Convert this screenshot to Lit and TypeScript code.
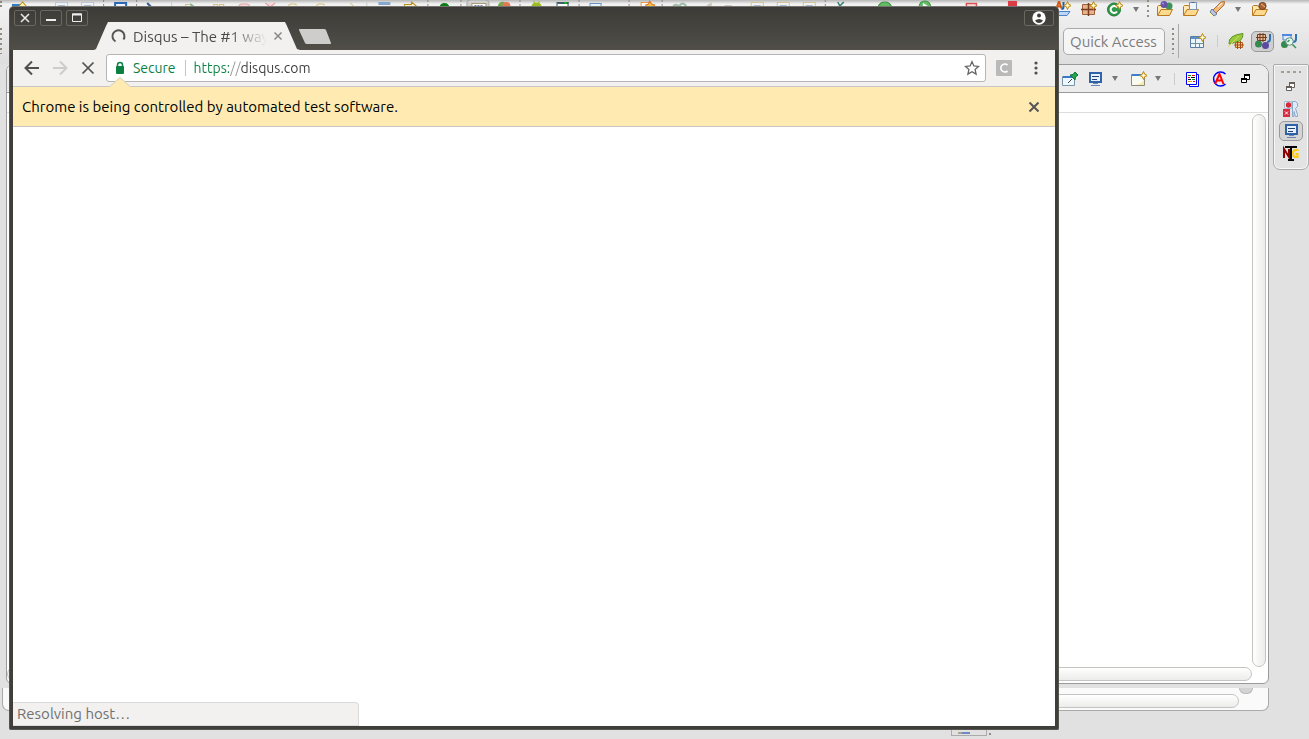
import { LitElement, html, css, svg } from "lit";
import { customElement } from "lit/decorators.js";

const shared = css`
  :host { display: block; box-sizing: border-box; font-family: Ubuntu, "Noto Sans", "Open Sans", sans-serif; }
  * { box-sizing: border-box; }
  button, input { font: inherit; margin: 0; padding: 0; border: 0; background: none; color: inherit; outline: none; }
  button { display: flex; align-items: center; justify-content: center; flex: none; }
  svg { display: block; flex: none; }
`;

const sparkle = svg`<path d="M12.500.5l1.200 2.800 2.800 1.200-2.800 1.200-1.200 2.800-1.200-2.800-2.800-1.200 2.800-1.200z" fill="#fff8cf" stroke="#b8860b"/>`;
const folder = svg`<path d="M.5 14.500V5.500l1-1h4l1 1.500h6v3" fill="#ffe9b0" stroke="#b9791f"/><path d="M.7 14.500L4 8.500h11.500l-3 6z" fill="#fdd98d" stroke="#b9791f"/>`;

const icons: Record<string, unknown> = {
  aspect: svg`<path d="M1.500 14.500l3-4h10.500l-3 4z" fill="#b9d8f8" stroke="#4b80c4"/><path d="M1.500 7.500L4 0l2.500 7.500M2.500 5.500h3" fill="none" stroke="#d05a10" stroke-width="2"/><path d="M8.500 1v5q0 2-2 2" fill="none" stroke="#1b5fa8" stroke-width="2"/>${sparkle}`,
  package: svg`<path d="M1.500 3.500h12v10h-12z" fill="#e3b48c" stroke="#a35f38"/><path d="M7.500 2v13M0 8.500h15" stroke="#7b3b22" stroke-width="1.500"/>${sparkle}`,
  klass: svg`<circle cx="7" cy="8.500" r="6.500" fill="#31994a" stroke="#1c7434"/><path d="M10 6.500a3.500 3.500 0 1 0 0 4" fill="none" stroke="#fff" stroke-width="2"/>${sparkle}`,
  types: svg`${folder}<circle cx="12" cy="5" r="3.500" fill="#39935a"/><circle cx="7" cy="3.500" r="3.500" fill="#6552a7"/><circle cx="6" cy="2.500" r="1" fill="#a99bd8"/>`,
  task: svg`${folder}<path d="M6.500 1.500h7v7h-7z" fill="#eef4fb" stroke="#7d93ad"/><path d="M8.500 1.500h3" stroke="#4d6a8c"/>`,
  rocket: svg`<path d="M0 16l2-6 4 4z" fill="#fff6a8"/><path d="M4 9l8-8 3.500-.5-.5 3.500-8 8z" fill="#f4b979" stroke="#aa6e35"/><path d="M3 8l5 5-3 2-4-4z" fill="#b6c4dc" stroke="#6f7fa0"/><path d="M9 6l4-4" stroke="#fff"/>`,
  open: svg`${folder}<circle cx="10.500" cy="5" r="3.600" fill="#a86334" stroke="#74401e"/><path d="M9 3l4 3" stroke="#e6bb90"/>`,
  perspective: svg`<path d="M.5 3.500h13v11H.5z" fill="#e9f5fb" stroke="#5b7da0"/><path d="M1 5h12" stroke="#5d90c4" stroke-width="2"/><path d="M5.500 6v8M1 10.500h12M9.500 10v4" stroke="#6e9297"/>${sparkle}`,
  leaf: svg`<path d="M1 11Q0 2 15 .5q0 8-8 9z" fill="#93cb3d" stroke="#63942a"/><path d="M0 14L11 3" stroke="#e3d060"/><path d="M7.500 9.500h7v5h-7z" fill="#f8c791" stroke="#b5631c"/><path d="M9.500 8v8M12.500 8v8M6 12h10" stroke="#a34c12"/>`,
  java: svg`<path d="M2.500 1.500h8v6h-8z" fill="#e8bd96" stroke="#713b20"/><path d="M5 0v9M8 0v9M1 4.500h11" stroke="#713b20"/><circle cx="3.500" cy="11" r="3.500" fill="#34894e"/><circle cx="10.500" cy="12.500" r="3.500" fill="#5d4aa0"/><path d="M15 1v5q0 3-3 3" fill="none" stroke="#2e72b1" stroke-width="2"/>`,
  browse: svg`<path d="M2 2h8v5H2z" fill="#dcebfa" stroke="#4f86c8"/><path d="M1 2h10" stroke="#4f86e0" stroke-width="2"/><path d="M15 1v5q0 3-3 3" fill="none" stroke="#2e72b1" stroke-width="2"/><circle cx="3.500" cy="11.500" r="3.500" fill="#34894e"/><circle cx="8.500" cy="8.500" r="3.800" fill="#e7f6ed" stroke="#608c83"/><path d="M6.500 9l2-2M11.500 11.500L15 15" stroke="#37945a" stroke-width="1.500"/>`,
  pin: svg`<path d="M.5 5.500h12v9H.5z" fill="#edf8fe" stroke="#7794aa"/><path d="M1 6h11" stroke="#377bc6" stroke-width="2"/><path d="M6 12l4-4" stroke="#444"/><path d="M8 4l5 5 .5-3L16 4l-3-3-2 2.500z" fill="#23a452" stroke="#137238"/>`,
  monitor: svg`<path d="M2 2h11v9H2z" fill="#e5f1ff" stroke="#2f62a9" stroke-width="2"/><path d="M4 5.500h7M4 8.500h5" stroke="#243f76"/><path d="M5 12.500h5M3 14.500h9" stroke="#6685b4"/>`,
  console: svg`<path d="M.5 3.500h13v11H.5z" fill="#f8fbef" stroke="#8b897a"/><path d="M1 4h12" stroke="#3c7fcf" stroke-width="2"/><path d="M4 14Q12 13 13 8v6z" fill="#fae8a9"/>${sparkle}`,
  log: svg`<path d="M4.500 3.500h9v12h-9z" fill="#fff" stroke="#00f"/><path d="M1.500 1.500h10v12h-10z" fill="#fff" stroke="#00f"/><path d="M3 4.500h3M7 8.500h3" stroke="#080"/><path d="M7 4.500h3M3 6.500h2" stroke="#e00"/><path d="M6 6.500h4M3 8.500h3" stroke="#111"/><path d="M3 10.500h4" stroke="#d8a800"/><path d="M8 10.500h2" stroke="#e00"/>`,
  annotate: svg`<path d="M14.500 3A7 7 0 1 0 14.500 13" fill="none" stroke="#00f" stroke-width="1.500"/><path d="M4 13L8.500 3 12.500 13M6 9.500h5" fill="none" stroke="#f00" stroke-width="2"/>`,
  restore: svg`<path d="M6.500 4.500h5v4h-5zM3.500 8.500h5v3h-5z" fill="#fff" stroke="currentColor"/><path d="M6 4h6M3 8h6" stroke="currentColor" stroke-width="2"/>`,
  server: svg`<path d="M1.500.5h7v7h-7z" fill="#e2f0fb" stroke="#aabace"/><circle cx="5.500" cy="4" r="2.700" fill="#d62835"/><path d="M9.500 15.500V.5h3q3 1 2 5l-2 2 2 6v2h-2l-1.500-5v5z" fill="#dfeaf6" stroke="#8ba8c8"/><path d="M0 8h7v8H0z" fill="#d82c42"/><path d="M2 10.500l3 3m0-3l-3 3" stroke="#fff"/>`,
  testng: svg`<path d="M1 13V4l5 8V4" fill="none" stroke="#900000" stroke-width="2"/><path d="M15.500 5h-3q-2.500 0-2.500 3.500t2.500 3.500h2V9h-2" fill="none" stroke="#fc0" stroke-width="2"/><path d="M2 2h12M8 2v13M5 15h6" stroke="#000" stroke-width="2"/>`,
};

const icon = (name: string) => html`<svg width="16" height="16" viewBox="0 0 16 16" aria-hidden="true">${icons[name]}</svg>`;
const tool = (name: string, label: string) => html`<button class="tool" aria-label=${label}>${icon(name)}</button>`;
const arrow = (label: string) => html`<button class="arrow" aria-label=${label}><svg width="6" height="5" viewBox="0 0 6 5"><path d="M0 0h6L3 5z" fill="#777"/></svg></button>`;

@customElement("ide-toolbars")
class IdeToolbars extends LitElement {
  static styles = [shared, css`
    :host { background: linear-gradient(#b7b7b7, #f2f2f2 4px, #dedede); }
    .row { display: flex; align-items: center; justify-content: flex-end; }
    .main { height: 18px; gap: 10px; padding-right: 41px; }
    .strip { flex: 1; min-width: 0; overflow: hidden; align-self: flex-start; }
    .search { height: 46px; padding-right: 12px; gap: 7px; }
    .tool, .toggled { width: 16px; height: 16px; }
    .arrow { margin-right: 1px; }
    .toggled { width: 23px; height: 21px; border: 1px solid #999; border-radius: 5px; background: #cfcfcf; }
    .grip { width: 2px; align-self: stretch; background: repeating-linear-gradient(#928d84 0 2px, transparent 2px 5px); }
    .main .grip { margin: 0 -2px 0 -3px; }
    .search .grip { height: 26px; align-self: center; }
    .first { margin-right: auto; }
    .rule { width: 1px; height: 34px; background: #aaa; margin-left: -3px; margin-right: 4px; }
    .thin { width: 1px; height: 12px; background: #ccc; margin: 0 3px 0 4px; }
    .quick { width: 102px; height: 27px; padding: 0 6px; border: 1px solid #aaa; border-radius: 5px; background: #f5f5f5; font-size: 15px; }
    .quick::placeholder { color: #7c7c7c; opacity: 1; }
  `];

  render() {
    const dots = [103, 136, 427, 460, 519, 578, 628, 661, 824];
    const pages = [55, 81, 750, 776, 802];
    return html`
      <div class="row main">
        <svg class="strip" height="8" viewBox="0 0 1044 8" preserveAspectRatio="xMinYMin slice" aria-hidden="true">
          ${dots.map((x) => svg`<path d="M${x} 0h1v2h-1zM${x} 4h1v2h-1z" fill="#8d8980"/>`)}
          ${pages.map((x) => svg`<path d="M${x}.5 8V2.500h12V8" fill="#eff2f5" stroke=${x > 700 ? "#d4c496" : "#bcc7cf"}/><path d="M${x + 3} 5.500h7" stroke="#a9b8cd"/>`)}
          <path d="M0 1h2v2H0zM0 5h2v2H0z" fill="#8d8980"/>
          <path d="M12 4h9v3h-9z" fill="#2e7cc3"/><path d="M18 7l4.500-5L27 7z" fill="#fff4b0" stroke="#bb8610"/>
          <path d="M115 8V3h11v5" fill="#eef5ff" stroke="#2c66b5" stroke-width="2"/>
          <path d="M147 3l5 5" stroke="#335c91" stroke-width="2"/><path d="M171.500 2v5M366.500 2v5" stroke="#ccc"/>
          <path d="M185.500 8V4.500h4M213.500 8V4.500h4V8m2 0V4.500h4V8M288.500 8V5l2-1h4l2 1M316.500 8V5l2-1h4l2 1M350 3l5 5" fill="none" stroke="#d8c080"/>
          <path d="M190 4l4 3" stroke="#7eb98d" stroke-width="2"/><path d="M239 8V5l2-1h6l2 1v3M265 3l5 4 5-4" fill="#f8d8d8" stroke="#e4a4a4"/>
          <path d="M378 2h12v3h-12z" fill="#86a8ce"/><path d="M404 8V4.500h7V2l5 4" fill="#fff4c8" stroke="#be8b20"/>
          <path d="M439 7q1-4 5-4t5 4z" fill="#087e13"/>
          <path d="M466.500 8V3q0-3 4-3h14q4 0 4 3v5" fill="#d0d0d0" stroke="#aaa"/><path d="M471.500 8V3.500h14V8" fill="#fff" stroke="#aa9b73"/><path d="M474 5.500h9" stroke="#657fa2" stroke-dasharray="2 1"/>
          <path d="M497 7q1-6 7-5v5z" fill="#72a850"/><circle cx="506" cy="6" r="4" fill="#e77753"/>
          <path d="M531 7q1-4 5-4t5 4zM533 1l2 3m4-3l-2 3" fill="#9dbc22" stroke="#9dbc22"/>
          <path d="M556.500 8V2.500h11V8" fill="#fff" stroke="#315569"/><path d="M557 3h11" stroke="#3f606b" stroke-width="2"/><path d="M564 3h2" stroke="#0c0" stroke-width="2"/>
          <path d="M589.500 8V3.500h11V8" fill="#e5f4ff" stroke="#6992bf"/>
          <path d="M640.500 8V2.500h8V8" fill="#fff" stroke="#e49b4c"/><path d="M649 1l2 3 3 1-2 3h-5l-2-3 3-1z" fill="#ffc34d" stroke="#dd7924"/>
          <path d="M672 7q3-4 6-1M678 7q4-7 8 0" fill="none" stroke="#9fbeaa" stroke-width="2"/><path d="M704 7l7-5v5zM724 5h7v2h-7z" fill="#cbc7bb"/>
          <path d="M837 2l2 4m0 0l4-4" stroke="#357a72" fill="none" stroke-width="1.500"/>
          <path d="M877 7q2-5 7-5t7 5zM918 7q1-6 6-6t6 6z" fill="#64bc65" stroke="#3a9344"/><path d="M922 3l5 3-5 2z" fill="#fff"/>
          <path d="M965.500 8V3.500h10V8" fill="#ffdada" stroke="#d65454" stroke-width="1.500"/><path d="M1007 1h9v7h-9z" fill="#dc3d45"/>
        </svg>
        ${tool("aspect", "New aspect")}${tool("package", "New package")}${tool("klass", "New class")}${arrow("New class options")}
        <span class="grip"></span>
        ${tool("types", "Open type")}${tool("task", "Open task")}${tool("rocket", "Launch")}${arrow("Launch options")}${tool("open", "Open resource")}
      </div>
      <div class="row search">
        <span class="grip first"></span>
        <input class="quick" placeholder="Quick Access" aria-label="Quick Access">
        <span class="grip"></span><span class="rule"></span>
        ${tool("perspective", "Open perspective")}<span class="thin"></span>
        ${tool("leaf", "Spring")}<button class="toggled" aria-label="Java" aria-pressed="true">${icon("java")}</button>${tool("browse", "Java browsing")}
      </div>`;
  }
}

@customElement("ide-workbench")
class IdeWorkbench extends LitElement {
  static styles = [shared, css`
    :host { display: flex; flex: 1; flex-direction: column; min-height: 0; }
    .work { display: flex; flex: 1; min-height: 0; gap: 4px; padding-left: 6px; align-items: stretch; }
    .view { flex: 1; display: flex; flex-direction: column; border: 1px solid #9a9a9a; border-radius: 7px 10px 6px 6px; background: #fff; overflow: hidden; }
    .tabs { height: 28px; flex: none; display: flex; align-items: center; justify-content: flex-end; gap: 10px; padding-right: 14px; border-bottom: 1px solid #9a9a9a; background: #ececec; }
    .tool { width: 16px; height: 16px; }
    .tabs .tool:last-child { margin-left: 1px; }
    .arrow { margin: 0 3px 0 -2px; }
    .thin { width: 1px; height: 12px; background: #ccc; }
    .label { height: 20px; flex: none; border-bottom: 1px solid #ddd; }
    .pane { flex: 1; display: grid; grid-template-columns: 1fr 14px; grid-template-rows: 1fr 14px; padding: 1px 2px 2px 0; }
    .vbar, .hbar { border: 1px solid #c4c4c0; border-radius: 7px; background: linear-gradient(90deg, #fff, #ececea); }
    .vbar { grid-column: 2; }
    .hbar { grid-column: 1; background: linear-gradient(#fff, #ececea); }
    .trim { width: 36px; height: 106px; display: flex; flex-direction: column; align-items: center; gap: 6px; padding-top: 6px; border: 1px solid #aaa; border-radius: 2px 2px 7px 7px; background: #e3e3e3; box-shadow: inset 0 0 0 1px #f7f7f7; color: #665f59; }
    .dots { width: 20px; height: 2px; background: repeating-linear-gradient(90deg, #a49f95 0 3px, transparent 3px 6px); }
    .active { width: 24px; height: 20px; padding-left: 2px; border: 1px solid #999; border-radius: 5px; background: #d5d5d5; margin: -2px 0; }
    .lower { height: 23px; margin: 4px 40px 0 2px; border: 1px solid #aaa; border-top: 0; border-radius: 0 0 7px 7px; background: #fafafa; display: flex; padding: 6px 29px 2px 6px; position: relative; }
    .lower .hbar { flex: 1; }
    .stub { position: absolute; right: 15px; top: 0; width: 14px; height: 6px; border-radius: 0 0 7px 7px; background: #d4d4d4; border: 1px solid #bbb; border-top: 0; }
    .status { height: 28px; flex: none; display: flex; justify-content: flex-end; padding: 17px 318px 0 0; gap: 2px; }
    .job { width: 36px; height: 8px; border: 1px solid #aaa; border-top: 0; }
    .job svg { margin: 0 0 0 6px; }
    .grip { width: 2px; height: 9px; background: repeating-linear-gradient(#928d84 0 2px, transparent 2px 5px); }
  `];

  render() {
    return html`
      <div class="work">
        <section class="view">
          <div class="tabs">
            ${tool("pin", "Pin console")}${tool("monitor", "Display selected console")}${arrow("Console list")}
            ${tool("console", "Open console")}${arrow("Console types")}<span class="thin"></span>
            ${tool("log", "Log")}${tool("annotate", "Annotate")}${tool("restore", "Restore")}
          </div>
          <div class="label"></div>
          <div class="pane"><span class="vbar"></span><span class="hbar"></span></div>
        </section>
        <aside class="trim">
          <span class="dots"></span>
          ${tool("restore", "Restore view")}${tool("server", "Servers")}
          <button class="active" aria-label="Console">${icon("monitor")}</button>
          ${tool("testng", "TestNG")}
        </aside>
      </div>
      <div class="lower"><span class="hbar"></span><span class="stub"></span></div>
      <div class="status">
        <div class="job"><svg width="14" height="7" viewBox="0 0 14 7"><path d="M0 5h10" stroke="#aaa68b" stroke-width="2"/><path d="M4 5h8" stroke="#7088bf" stroke-width="2"/></svg></div>
        <span class="grip"></span>
      </div>`;
  }
}

@customElement("browser-window")
class BrowserWindow extends LitElement {
  static styles = [shared, css`
    :host { display: flex; flex-direction: column; background: #3f3e3a; border: 1px solid #56554f; border-top-color: #74736d; border-radius: 5px 5px 2px 2px; padding: 0 3px 3px; }
    .title { height: 43px; flex: none; display: flex; margin: 0 -3px; padding: 0 4px; background: linear-gradient(#3c3b37, #504e47); border-radius: 4px 4px 0 0; }
    .controls { display: flex; gap: 4px; padding-top: 3px; }
    .control { width: 22px; height: 16px; border: 1px solid #686760; border-radius: 2px; }
    .tabstrip { display: flex; flex: 1; align-items: flex-end; padding-left: 6px; }
    .tab { width: 206px; height: 28px; padding: 0 17px 0 16px; display: flex; align-items: center; gap: 6px; background: #f2f1f0; clip-path: polygon(0 100%, 2px 96%, 12px 4px, 14px 0, 191px 0, 193px 4px, 203px 96%, 100% 100%); font-size: 15px; color: #4a4a4a; }
    .name { flex: 1; min-width: 0; padding-left: 1px; white-space: nowrap; mask-image: linear-gradient(90deg, #000 98px, transparent 135px); }
    .newtab { width: 34px; height: 16px; margin: 0 0 6px -2px; }
    .user { width: 30px; height: 16px; margin-top: 3px; border: 1px solid #686760; border-radius: 2px; }
    .toolbar { height: 36px; flex: none; display: flex; align-items: center; padding: 0 11px 0 10px; background: #f2f1f0; }
    .nav { width: 18px; height: 28px; margin-right: 10px; }
    .omni { flex: 1; min-width: 0; height: 28px; margin: 0 10px 0 -1px; padding: 0 5px 0 7px; display: flex; align-items: center; background: #fff; border: 1px solid #b5b5b5; border-radius: 3px; font-size: 14px; }
    .secure { gap: 7px; color: #0b8043; }
    .split { width: 1px; height: 16px; margin: 0 8px 0 9px; background: #c5c5c5; }
    .url { flex: 1; min-width: 0; height: 24px; color: transparent; background: linear-gradient(90deg, #0b8043 35px, #999 35px 47px, #3c3c3c 47px); background-clip: text; -webkit-background-clip: text; }
    .menu { width: 16px; height: 24px; margin-left: 16px; }
    .info { height: 41px; flex: none; display: flex; align-items: center; justify-content: space-between; padding: 0 14px 0 9px; background: #ffebb2; border: 1px solid #c8c6c4; border-width: 1px 0; font-size: 15px; color: #000; position: relative; }
    .notch { position: absolute; left: 96px; top: -10px; }
    .page { flex: 1; display: flex; align-items: flex-end; background: #fff; }
    .bubble { width: 346px; height: 24px; padding: 0 4px; border: 1px solid #dcdad8; border-left: 0; border-radius: 0 4px 0 0; background: #f2f1f0; color: #707070; font-size: 15px; line-height: 22px; }
  `];

  render() {
    return html`
      <header class="title">
        <div class="controls">
          <button class="control" aria-label="Close"><svg width="10" height="10"><path d="M1 1l8 8M9 1L1 9" stroke="#eee" stroke-width="1.500"/></svg></button>
          <button class="control" aria-label="Minimize"><svg width="10" height="10"><path d="M0 7h10" stroke="#eee" stroke-width="2"/></svg></button>
          <button class="control" aria-label="Maximize"><svg width="10" height="10"><path d="M.5 1v7.500h9V1z" fill="none" stroke="#eee"/><path d="M0 1.500h10" stroke="#eee" stroke-width="2"/></svg></button>
        </div>
        <div class="tabstrip">
          <div class="tab">
            <svg width="16" height="16"><path d="M5.500 13.500A6 6 0 1 1 13.500 11.500" fill="none" stroke="#555" stroke-width="2"/></svg>
            <span class="name">Disqus – The #1 way</span>
            <button aria-label="Close tab"><svg width="10" height="10"><path d="M1.500 1.500l7 7M8.500 1.500l-7 7" stroke="#888" stroke-width="1.500"/></svg></button>
          </div>
          <button class="newtab" aria-label="New tab"><svg width="34" height="16"><path d="M1 2q-.5-1 1-1h24q1.500 0 2 1l5 13q.5 1-1 1H9q-1.500 0-2-1z" fill="#cfcdcc"/></svg></button>
        </div>
        <button class="user" aria-label="Profile"><svg width="14" height="14"><circle cx="7" cy="7" r="6.700" fill="#fff"/><circle cx="7" cy="4.500" r="2" fill="#3f3e3a"/><path d="M3 9.500q4-3 8 0-1.500 2.500-4 2.500t-4-2.500z" fill="#3f3e3a"/></svg></button>
      </header>
      <nav class="toolbar">
        <button class="nav" aria-label="Back"><svg width="16" height="16"><path d="M15 8H2M8 1.500L1.500 8 8 14.500" fill="none" stroke="#505050" stroke-width="2"/></svg></button>
        <button class="nav" aria-label="Forward"><svg width="16" height="16"><path d="M1 8h13M8 1.500L14.500 8 8 14.500" fill="none" stroke="#ccc" stroke-width="2"/></svg></button>
        <button class="nav" aria-label="Stop loading"><svg width="14" height="14"><path d="M1.500 1.500l11 11M12.500 1.500l-11 11" stroke="#505050" stroke-width="1.700"/></svg></button>
        <div class="omni">
          <button class="secure"><svg width="12" height="14"><path d="M3.500 7V4q0-2.500 2.500-2.500T8.500 4v3" fill="none" stroke="#0b8043" stroke-width="1.500"/><rect x="2" y="5" width="8" height="8" rx="1" fill="#0b8043"/></svg>Secure</button>
          <span class="split"></span>
          <input class="url" aria-label="Address" value="https://disqus.com">
          <button aria-label="Bookmark this page"><svg width="16" height="16"><path d="M8 1.700l1.900 4.200 4.600.5-3.400 3.100 1 4.600L8 11.700l-4.100 2.400 1-4.600L1.500 6.400l4.600-.5z" fill="none" stroke="#666" stroke-width="1.300"/></svg></button>
        </div>
        <button aria-label="Extension"><svg width="16" height="16"><rect width="16" height="16" rx="1" fill="#b9b9b9"/><path d="M11.500 5A4 4 0 1 0 11.500 11" fill="none" stroke="#fff" stroke-width="1.700"/></svg></button>
        <button class="menu" aria-label="Menu"><svg width="4" height="14"><circle cx="2" cy="2" r="1.600" fill="#505050"/><circle cx="2" cy="7" r="1.600" fill="#505050"/><circle cx="2" cy="12" r="1.600" fill="#505050"/></svg></button>
      </nav>
      <div class="info">
        <svg class="notch" width="22" height="11"><path d="M0 11v-1L11 0l11 10v1z" fill="#ffebb2"/><path d="M1 9.500L11 .5l10 9" fill="none" stroke="#d8cfb8"/></svg>
        <span>Chrome is being controlled by automated test software.</span>
        <button aria-label="Dismiss"><svg width="14" height="14"><path d="M2.500 2.500l9 9M11.500 2.500l-9 9" stroke="#555" stroke-width="2"/></svg></button>
      </div>
      <main class="page"><div class="bubble" role="status">Resolving host…</div></main>`;
  }
}

@customElement("app-root")
class AppRoot extends LitElement {
  static styles = [shared, css`
    :host { display: flex; flex-direction: column; height: 100vh; overflow: hidden; position: relative; background: #e1e1e1; }
    .window { position: absolute; left: 9px; top: 6px; right: 250px; bottom: 9px; }
  `];

  render() {
    return html`<ide-toolbars></ide-toolbars><ide-workbench></ide-workbench><browser-window class="window"></browser-window>`;
  }
}
